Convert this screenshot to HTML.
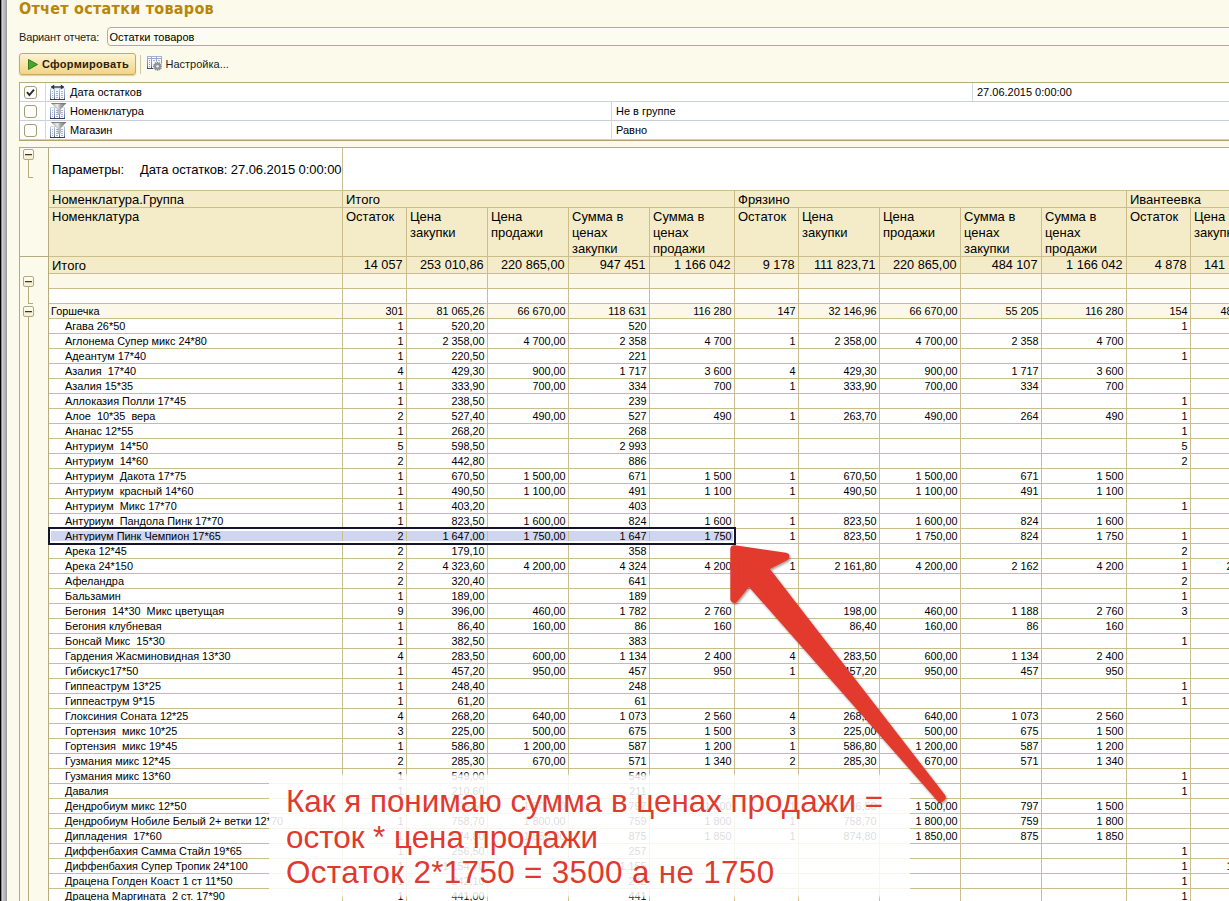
<!DOCTYPE html>
<html lang="ru">
<head>
<meta charset="utf-8">
<title>Отчет остатки товаров</title>
<style>
html,body{margin:0;padding:0;}
body{width:1229px;height:901px;overflow:hidden;position:relative;background:#fcfaeb;font-family:"Liberation Sans",sans-serif;font-size:11px;color:#000;}
#strip{position:absolute;left:0;top:0;width:8px;height:901px;background:linear-gradient(to right,#000 0px,#000 1px,#8a8a8a 1px,#8a8a8a 2px,#cfcfcf 2px,#cfcfcf 3px,#bebebe 3px,#bebebe 4px,#b8b8b8 4px,#b8b8b8 5px,#adadad 5px,#adadad 6px,#9c9e9e 6px,#9c9e9e 7px,#fefeef 7px,#fefeef 8px);}
.title{position:absolute;left:19px;top:-1px;font-family:"DejaVu Sans Condensed","Liberation Sans",sans-serif;font-weight:bold;font-size:16px;line-height:20px;color:#b8860b;white-space:nowrap;letter-spacing:0.25px;}
.lbl{position:absolute;left:19px;top:30px;line-height:14px;color:#222;white-space:nowrap;letter-spacing:-0.15px;}
.input{position:absolute;left:107px;top:27px;width:1140px;height:17px;border:1px solid #b9ad7e;border-radius:4px;background:#fdfcf1;line-height:18px;padding-left:1.5px;box-sizing:content-box;white-space:nowrap;}
.btn{position:absolute;left:19px;top:53px;width:115px;height:20px;border:1px solid #cfa95a;border-radius:3px;background:linear-gradient(#fcf3d6,#f7e3a6 55%,#f1d487);box-shadow:0 1px 1px rgba(160,130,60,.35);}
.btn svg{position:absolute;left:8px;top:5px;}
.btn span{position:absolute;left:22px;top:3px;line-height:14px;font-weight:bold;letter-spacing:0.27px;white-space:nowrap;color:#2a2210;}
.sep{position:absolute;left:140px;top:55px;width:1px;height:19px;background:#d3c79d;}
.tb-ico{position:absolute;left:147px;top:56px;}
.tb-txt{position:absolute;left:165.5px;top:57px;line-height:14px;color:#1a1a1a;white-space:nowrap;}
/* filter table */
#flt{position:absolute;left:19px;top:82px;width:1215px;height:57px;border:1px solid #b9ac7c;border-bottom-color:#b0a372;background:#fff;}
#flt .fr{position:absolute;left:0;width:100%;height:18px;border-bottom:1px solid #c9d0da;}
#flt .fr:last-child{border-bottom:none;}
#flt .vs{position:absolute;top:0;width:1px;background:#d4d9e1;}
#flt .cb{position:absolute;left:4px;top:3px;width:11px;height:11px;border:1px solid #a59b74;border-radius:3px;background:#fff;}
#flt .ic{position:absolute;left:30px;top:1px;}
#flt .t{position:absolute;top:2px;line-height:14px;white-space:nowrap;}
/* sheet */
#sheet{position:absolute;left:0;top:0;width:1229px;height:901px;font-family:"Liberation Sans",sans-serif;}
#sheetbg{position:absolute;left:49px;top:148px;width:1180px;height:760px;background:#fff;}
.r{position:absolute;left:49px;width:1180px;border-bottom:1px solid #cbbd8c;}
.r .c{position:absolute;top:0;height:100%;border-right:1px solid #cbbd8c;box-sizing:content-box;white-space:nowrap;overflow:hidden;margin-left:-49px;}
.d .c{font-size:10.9px;line-height:15px;}
.tot .c{font-size:13px;line-height:17px;}
.c.n{text-align:right;}
.c.n{padding-right:3px;box-sizing:border-box !important;}
.d .c.n{font-size:10.8px;padding-right:2.5px;}
.tot .c.n{font-size:12.7px;padding-right:3.5px;}
.c.l{box-sizing:border-box !important;white-space:pre !important;}
.h1 .c,.h2 .c{font-size:13px;line-height:16px;padding-left:3px;padding-top:1px;box-sizing:border-box;}
.param{position:absolute;left:49px;width:1180px;background:#fff;border-bottom:1px solid #cbbd8c;font-size:13px;}
.param i{position:absolute;left:293px;top:0;width:1px;height:100%;background:#cbbd8c;}
.param span{position:absolute;top:14px;letter-spacing:-0.08px;line-height:16px;margin-left:-49px;white-space:nowrap;}

#tree .tl{position:absolute;background:#b6ab7e;}
#tree .tb{position:absolute;left:23px;width:9px;height:9px;border:1px solid #b5a878;border-radius:2px;background:linear-gradient(#fffef6,#f3eed6);}
#tree .tb i{position:absolute;left:1px;top:4px;width:7px;height:1px;background:#4a3608;box-shadow:0 0.5px 0 rgba(74,54,8,.5);}
#sel{position:absolute;left:48px;top:527px;width:684px;height:14px;border:2px solid #14142e;box-shadow:inset 0 2px 0 0 #fff,inset 0 -2px 0 0 #fff,inset 1px 0 0 0 #fff,inset -1px 0 0 0 #fff;}
#ovl{position:absolute;left:269px;top:773px;width:641px;height:126px;background:linear-gradient(to bottom,rgba(255,255,255,0) 0,rgba(255,255,255,.86) 3px,rgba(255,255,255,.86) 122px,rgba(255,255,255,0) 126px);}
#note{position:absolute;left:286px;top:784px;font-family:"Liberation Sans",sans-serif;font-size:31.4px;line-height:35.5px;color:#e0392e;white-space:nowrap;}
#arrow{position:absolute;left:0;top:0;pointer-events:none;}
</style>
</head>
<body>
<div id="strip"></div>
<div class="title">Отчет остатки товаров</div>
<div class="lbl">Вариант отчета:</div>
<div class="input">Остатки товаров</div>
<div class="btn"><svg width="10" height="11" viewBox="0 0 10 11"><path d="M0.5 0.5 L9.5 5.5 L0.5 10.5 Z" fill="#4aa52e" stroke="#2f7d1a" stroke-width="1"/></svg><span>Сформировать</span></div>
<div class="sep"></div>
<svg class="tb-ico" width="16" height="16" viewBox="0 0 16 16">
<defs><linearGradient id="tg" x1="0" y1="0" x2="0" y2="1"><stop offset="0" stop-color="#a3b5d3"/><stop offset="0.75" stop-color="#6f86ac"/><stop offset="1" stop-color="#2b4163"/></linearGradient></defs>
<g shape-rendering="crispEdges"><rect x="0" y="0" width="15" height="13" fill="url(#tg)"/>
<rect x="1" y="1" width="3" height="1" fill="#fff"/><rect x="5" y="1" width="4" height="1" fill="#fff"/><rect x="10" y="1" width="4" height="1" fill="#fff"/>
<rect x="1" y="3" width="3" height="9" fill="#f5f9fe"/><rect x="5" y="3" width="4" height="9" fill="#f5f9fe"/><rect x="10" y="3" width="4" height="9" fill="#f5f9fe"/>
<g fill="#8e9cbc"><rect x="2" y="4" width="1" height="1"/><rect x="2" y="6" width="1" height="1"/><rect x="2" y="8" width="1" height="1"/><rect x="2" y="10" width="1" height="1"/><rect x="6" y="4" width="2" height="1" fill="#aab5cd"/><rect x="11" y="4" width="2" height="1" fill="#aab5cd"/></g></g>
<circle cx="10.5" cy="10.3" r="4.9" fill="#fcfaeb"/>
<g transform="translate(10.5 10.3)">
<g fill="#8c8f9a"><rect x="-0.75" y="-4.5" width="1.5" height="9"/><rect x="-0.75" y="-4.5" width="1.5" height="9" transform="rotate(30)"/><rect x="-0.75" y="-4.5" width="1.5" height="9" transform="rotate(60)"/><rect x="-0.75" y="-4.5" width="1.5" height="9" transform="rotate(90)"/><rect x="-0.75" y="-4.5" width="1.5" height="9" transform="rotate(120)"/><rect x="-0.75" y="-4.5" width="1.5" height="9" transform="rotate(150)"/></g>
<circle r="3.3" fill="#8f929d"/><circle r="1.2" fill="#f4f4f6"/>
</g>
</svg>

<div class="tb-txt">Настройка...</div>
<div id="flt">
<svg width="0" height="0" style="position:absolute"><defs>
<linearGradient id="tb1" x1="0" y1="0" x2="0" y2="1"><stop offset="0" stop-color="#c4d0e4"/><stop offset="0.8" stop-color="#7287a8"/><stop offset="1" stop-color="#2c4060"/></linearGradient>
<linearGradient id="fn" x1="0" y1="0" x2="1" y2="0"><stop offset="0" stop-color="#a8a8a8"/><stop offset="0.4" stop-color="#ececec"/><stop offset="0.62" stop-color="#a6a6a6"/><stop offset="1" stop-color="#6c6c6c"/></linearGradient>
</defs></svg>
<div class="fr" style="top:0"><div class="cb"><svg width="11" height="11" viewBox="0 0 11 11" style="position:absolute;left:0;top:0"><path d="M2 5.2 L4.4 8 L9 2.6" fill="none" stroke="#2b2b2b" stroke-width="1.9"/></svg></div>
<svg class="ic" width="17" height="17" viewBox="0 0 17 17"><g transform="translate(0 4)" shape-rendering="crispEdges"><rect x="0" y="0" width="15" height="12" fill="url(#tb1)"/><rect x="1" y="1" width="3" height="10" fill="#f6f9fd"/><rect x="5" y="1" width="4" height="10" fill="#f6f9fd"/><rect x="10" y="1" width="4" height="10" fill="#f6f9fd"/>
<rect x="0" y="0" width="15" height="1" fill="#d5deec"/><rect x="0" y="11" width="15" height="1" fill="#2c4060"/>
<g fill="#a4b1cb"><rect x="2" y="3" width="1" height="1"/><rect x="2" y="5" width="1" height="1"/><rect x="2" y="7" width="1" height="1"/><rect x="2" y="9" width="1" height="1"/><rect x="6" y="3" width="2" height="1"/><rect x="6" y="5" width="2" height="1"/><rect x="6" y="7" width="2" height="1"/><rect x="6" y="9" width="2" height="1"/><rect x="11" y="3" width="2" height="1"/><rect x="11" y="5" width="2" height="1"/><rect x="11" y="7" width="2" height="1"/><rect x="11" y="9" width="2" height="1"/></g></g><path d="M1.5 3 H13.5" stroke="#263645" stroke-width="1.4"/><path d="M0.6 3 L4.2 0.6 V5.4 Z M14.4 3 L10.8 0.6 V5.4 Z" fill="#263645"/></svg>
<div class="t" style="left:50px">Дата остатков</div><div class="t" style="left:957px">27.06.2015 0:00:00</div></div>
<div class="fr" style="top:19px"><div class="cb"></div>
<svg class="ic" width="17" height="17" viewBox="0 0 17 17"><g transform="translate(0 4)" shape-rendering="crispEdges"><rect x="0" y="0" width="15" height="12" fill="url(#tb1)"/><rect x="1" y="1" width="3" height="10" fill="#f6f9fd"/><rect x="5" y="1" width="4" height="10" fill="#f6f9fd"/><rect x="10" y="1" width="4" height="10" fill="#f6f9fd"/>
<rect x="0" y="0" width="15" height="1" fill="#d5deec"/><rect x="0" y="11" width="15" height="1" fill="#2c4060"/>
<g fill="#a4b1cb"><rect x="2" y="3" width="1" height="1"/><rect x="2" y="5" width="1" height="1"/><rect x="2" y="7" width="1" height="1"/><rect x="2" y="9" width="1" height="1"/><rect x="6" y="3" width="2" height="1"/><rect x="6" y="5" width="2" height="1"/><rect x="6" y="7" width="2" height="1"/><rect x="6" y="9" width="2" height="1"/><rect x="11" y="3" width="2" height="1"/><rect x="11" y="5" width="2" height="1"/><rect x="11" y="7" width="2" height="1"/><rect x="11" y="9" width="2" height="1"/></g></g><g><path d="M1.5 0.3 H16 L10.3 6.2 V11 L9 12 L8 11 V6.2 Z" fill="url(#fn)" stroke="#8a8a8a" stroke-width="0.5"/><path d="M1.5 0.3 H16" stroke="#6e6e6e" stroke-width="0.9"/></g></svg>
<div class="t" style="left:50px">Номенклатура</div><div class="t" style="left:596px">Не в группе</div></div>
<div class="fr" style="top:38px"><div class="cb"></div>
<svg class="ic" width="17" height="17" viewBox="0 0 17 17"><g transform="translate(0 4)" shape-rendering="crispEdges"><rect x="0" y="0" width="15" height="12" fill="url(#tb1)"/><rect x="1" y="1" width="3" height="10" fill="#f6f9fd"/><rect x="5" y="1" width="4" height="10" fill="#f6f9fd"/><rect x="10" y="1" width="4" height="10" fill="#f6f9fd"/>
<rect x="0" y="0" width="15" height="1" fill="#d5deec"/><rect x="0" y="11" width="15" height="1" fill="#2c4060"/>
<g fill="#a4b1cb"><rect x="2" y="3" width="1" height="1"/><rect x="2" y="5" width="1" height="1"/><rect x="2" y="7" width="1" height="1"/><rect x="2" y="9" width="1" height="1"/><rect x="6" y="3" width="2" height="1"/><rect x="6" y="5" width="2" height="1"/><rect x="6" y="7" width="2" height="1"/><rect x="6" y="9" width="2" height="1"/><rect x="11" y="3" width="2" height="1"/><rect x="11" y="5" width="2" height="1"/><rect x="11" y="7" width="2" height="1"/><rect x="11" y="9" width="2" height="1"/></g></g><g><path d="M1.5 0.3 H16 L10.3 6.2 V11 L9 12 L8 11 V6.2 Z" fill="url(#fn)" stroke="#8a8a8a" stroke-width="0.5"/><path d="M1.5 0.3 H16" stroke="#6e6e6e" stroke-width="0.9"/></g></svg>
<div class="t" style="left:50px">Магазин</div><div class="t" style="left:596px">Равно</div></div>
<div class="vs" style="left:25px;height:57px"></div>
<div class="vs" style="left:591px;top:19px;height:38px"></div>
<div class="vs" style="left:952px;height:18px"></div>
</div>

<div id="sheet">
<div id="sheetbg"></div>
<div class="param" style="top:148px;height:42px"><span style="left:52px">Параметры:</span><span style="left:140px">Дата остатков: 27.06.2015 0:00:00</span><i></i></div>
<div class="r h1" style="top:191px;height:16px;background:#f4ecc9"><div class="c hl" style="left:49px;width:294px">Номенклатура.Группа</div><div class="c hl" style="left:343px;width:392px">Итого</div><div class="c hl" style="left:735px;width:392px">Фрязино</div><div class="c hl" style="left:1127px;width:145px">Ивантеевка</div></div>
<div class="r h2" style="top:208px;height:48px;background:#f4ecc9"><div class="c hl" style="left:49px;width:294px">Номенклатура</div><div class="c hl" style="left:343px;width:64px">Остаток</div><div class="c hl" style="left:407px;width:81px">Цена<br>закупки</div><div class="c hl" style="left:488px;width:81px">Цена<br>продажи</div><div class="c hl" style="left:569px;width:81px">Сумма в<br>ценах<br>закупки</div><div class="c hl" style="left:650px;width:85px">Сумма в<br>ценах<br>продажи</div><div class="c hl" style="left:735px;width:64px">Остаток</div><div class="c hl" style="left:799px;width:81px">Цена<br>закупки</div><div class="c hl" style="left:880px;width:81px">Цена<br>продажи</div><div class="c hl" style="left:961px;width:81px">Сумма в<br>ценах<br>закупки</div><div class="c hl" style="left:1042px;width:85px">Сумма в<br>ценах<br>продажи</div><div class="c hl" style="left:1127px;width:64px">Остаток</div><div class="c hl" style="left:1191px;width:81px">Цена<br>закупки</div></div>
<div class="r tot" style="top:257px;height:16px;background:#f4ecc9;"><div class="c l" style="left:49px;width:294px;padding-left:3px">Итого</div><div class="c n" style="left:343px;width:64px">14 057</div><div class="c n" style="left:407px;width:81px">253 010,86</div><div class="c n" style="left:488px;width:81px">220 865,00</div><div class="c n" style="left:569px;width:81px">947 451</div><div class="c n" style="left:650px;width:85px">1 166 042</div><div class="c n" style="left:735px;width:64px">9 178</div><div class="c n" style="left:799px;width:81px">111 823,71</div><div class="c n" style="left:880px;width:81px">220 865,00</div><div class="c n" style="left:961px;width:81px">484 107</div><div class="c n" style="left:1042px;width:85px">1 166 042</div><div class="c n" style="left:1127px;width:64px">4 878</div><div class="c n" style="left:1191px;width:81px">141 187,15</div></div>
<div class="r d" style="top:274px;height:14px;background:#fbf8ea;"><div class="c l" style="left:49px;width:294px;padding-left:3px"></div><div class="c n" style="left:343px;width:64px"></div><div class="c n" style="left:407px;width:81px"></div><div class="c n" style="left:488px;width:81px"></div><div class="c n" style="left:569px;width:81px"></div><div class="c n" style="left:650px;width:85px"></div><div class="c n" style="left:735px;width:64px"></div><div class="c n" style="left:799px;width:81px"></div><div class="c n" style="left:880px;width:81px"></div><div class="c n" style="left:961px;width:81px"></div><div class="c n" style="left:1042px;width:85px"></div><div class="c n" style="left:1127px;width:64px"></div><div class="c n" style="left:1191px;width:81px"></div></div>
<div class="r d" style="top:289px;height:14px;background:#fff;"><div class="c l" style="left:49px;width:294px;padding-left:3px"></div><div class="c n" style="left:343px;width:64px"></div><div class="c n" style="left:407px;width:81px"></div><div class="c n" style="left:488px;width:81px"></div><div class="c n" style="left:569px;width:81px"></div><div class="c n" style="left:650px;width:85px"></div><div class="c n" style="left:735px;width:64px"></div><div class="c n" style="left:799px;width:81px"></div><div class="c n" style="left:880px;width:81px"></div><div class="c n" style="left:961px;width:81px"></div><div class="c n" style="left:1042px;width:85px"></div><div class="c n" style="left:1127px;width:64px"></div><div class="c n" style="left:1191px;width:81px"></div></div>
<div class="r d" style="top:304px;height:14px;background:#fbf8ea;"><div class="c l" style="left:49px;width:294px;padding-left:2px">Горшечка</div><div class="c n" style="left:343px;width:64px">301</div><div class="c n" style="left:407px;width:81px">81 065,26</div><div class="c n" style="left:488px;width:81px">66 670,00</div><div class="c n" style="left:569px;width:81px">118 631</div><div class="c n" style="left:650px;width:85px">116 280</div><div class="c n" style="left:735px;width:64px">147</div><div class="c n" style="left:799px;width:81px">32 146,96</div><div class="c n" style="left:880px;width:81px">66 670,00</div><div class="c n" style="left:961px;width:81px">55 205</div><div class="c n" style="left:1042px;width:85px">116 280</div><div class="c n" style="left:1127px;width:64px">154</div><div class="c n" style="left:1191px;width:81px">48 918,30</div></div>
<div class="r d" style="top:319px;height:14px;background:#fff;"><div class="c l" style="left:49px;width:294px;padding-left:16px">Агава 26*50</div><div class="c n" style="left:343px;width:64px">1</div><div class="c n" style="left:407px;width:81px">520,20</div><div class="c n" style="left:488px;width:81px"></div><div class="c n" style="left:569px;width:81px">520</div><div class="c n" style="left:650px;width:85px"></div><div class="c n" style="left:735px;width:64px"></div><div class="c n" style="left:799px;width:81px"></div><div class="c n" style="left:880px;width:81px"></div><div class="c n" style="left:961px;width:81px"></div><div class="c n" style="left:1042px;width:85px"></div><div class="c n" style="left:1127px;width:64px">1</div><div class="c n" style="left:1191px;width:81px"></div></div>
<div class="r d" style="top:334px;height:14px;background:#fff;"><div class="c l" style="left:49px;width:294px;padding-left:16px">Аглонема Супер микс 24*80</div><div class="c n" style="left:343px;width:64px">1</div><div class="c n" style="left:407px;width:81px">2 358,00</div><div class="c n" style="left:488px;width:81px">4 700,00</div><div class="c n" style="left:569px;width:81px">2 358</div><div class="c n" style="left:650px;width:85px">4 700</div><div class="c n" style="left:735px;width:64px">1</div><div class="c n" style="left:799px;width:81px">2 358,00</div><div class="c n" style="left:880px;width:81px">4 700,00</div><div class="c n" style="left:961px;width:81px">2 358</div><div class="c n" style="left:1042px;width:85px">4 700</div><div class="c n" style="left:1127px;width:64px"></div><div class="c n" style="left:1191px;width:81px"></div></div>
<div class="r d" style="top:349px;height:14px;background:#fff;"><div class="c l" style="left:49px;width:294px;padding-left:16px">Адеантум 17*40</div><div class="c n" style="left:343px;width:64px">1</div><div class="c n" style="left:407px;width:81px">220,50</div><div class="c n" style="left:488px;width:81px"></div><div class="c n" style="left:569px;width:81px">221</div><div class="c n" style="left:650px;width:85px"></div><div class="c n" style="left:735px;width:64px"></div><div class="c n" style="left:799px;width:81px"></div><div class="c n" style="left:880px;width:81px"></div><div class="c n" style="left:961px;width:81px"></div><div class="c n" style="left:1042px;width:85px"></div><div class="c n" style="left:1127px;width:64px">1</div><div class="c n" style="left:1191px;width:81px"></div></div>
<div class="r d" style="top:364px;height:14px;background:#fff;"><div class="c l" style="left:49px;width:294px;padding-left:16px">Азалия  17*40</div><div class="c n" style="left:343px;width:64px">4</div><div class="c n" style="left:407px;width:81px">429,30</div><div class="c n" style="left:488px;width:81px">900,00</div><div class="c n" style="left:569px;width:81px">1 717</div><div class="c n" style="left:650px;width:85px">3 600</div><div class="c n" style="left:735px;width:64px">4</div><div class="c n" style="left:799px;width:81px">429,30</div><div class="c n" style="left:880px;width:81px">900,00</div><div class="c n" style="left:961px;width:81px">1 717</div><div class="c n" style="left:1042px;width:85px">3 600</div><div class="c n" style="left:1127px;width:64px"></div><div class="c n" style="left:1191px;width:81px"></div></div>
<div class="r d" style="top:379px;height:14px;background:#fff;"><div class="c l" style="left:49px;width:294px;padding-left:16px">Азалия 15*35</div><div class="c n" style="left:343px;width:64px">1</div><div class="c n" style="left:407px;width:81px">333,90</div><div class="c n" style="left:488px;width:81px">700,00</div><div class="c n" style="left:569px;width:81px">334</div><div class="c n" style="left:650px;width:85px">700</div><div class="c n" style="left:735px;width:64px">1</div><div class="c n" style="left:799px;width:81px">333,90</div><div class="c n" style="left:880px;width:81px">700,00</div><div class="c n" style="left:961px;width:81px">334</div><div class="c n" style="left:1042px;width:85px">700</div><div class="c n" style="left:1127px;width:64px"></div><div class="c n" style="left:1191px;width:81px"></div></div>
<div class="r d" style="top:394px;height:14px;background:#fff;"><div class="c l" style="left:49px;width:294px;padding-left:16px">Аллоказия Полли 17*45</div><div class="c n" style="left:343px;width:64px">1</div><div class="c n" style="left:407px;width:81px">238,50</div><div class="c n" style="left:488px;width:81px"></div><div class="c n" style="left:569px;width:81px">239</div><div class="c n" style="left:650px;width:85px"></div><div class="c n" style="left:735px;width:64px"></div><div class="c n" style="left:799px;width:81px"></div><div class="c n" style="left:880px;width:81px"></div><div class="c n" style="left:961px;width:81px"></div><div class="c n" style="left:1042px;width:85px"></div><div class="c n" style="left:1127px;width:64px">1</div><div class="c n" style="left:1191px;width:81px"></div></div>
<div class="r d" style="top:409px;height:14px;background:#fff;"><div class="c l" style="left:49px;width:294px;padding-left:16px">Алое  10*35  вера</div><div class="c n" style="left:343px;width:64px">2</div><div class="c n" style="left:407px;width:81px">527,40</div><div class="c n" style="left:488px;width:81px">490,00</div><div class="c n" style="left:569px;width:81px">527</div><div class="c n" style="left:650px;width:85px">490</div><div class="c n" style="left:735px;width:64px">1</div><div class="c n" style="left:799px;width:81px">263,70</div><div class="c n" style="left:880px;width:81px">490,00</div><div class="c n" style="left:961px;width:81px">264</div><div class="c n" style="left:1042px;width:85px">490</div><div class="c n" style="left:1127px;width:64px">1</div><div class="c n" style="left:1191px;width:81px"></div></div>
<div class="r d" style="top:424px;height:14px;background:#fff;"><div class="c l" style="left:49px;width:294px;padding-left:16px">Ананас 12*55</div><div class="c n" style="left:343px;width:64px">1</div><div class="c n" style="left:407px;width:81px">268,20</div><div class="c n" style="left:488px;width:81px"></div><div class="c n" style="left:569px;width:81px">268</div><div class="c n" style="left:650px;width:85px"></div><div class="c n" style="left:735px;width:64px"></div><div class="c n" style="left:799px;width:81px"></div><div class="c n" style="left:880px;width:81px"></div><div class="c n" style="left:961px;width:81px"></div><div class="c n" style="left:1042px;width:85px"></div><div class="c n" style="left:1127px;width:64px">1</div><div class="c n" style="left:1191px;width:81px"></div></div>
<div class="r d" style="top:439px;height:14px;background:#fff;"><div class="c l" style="left:49px;width:294px;padding-left:16px">Антуриум  14*50</div><div class="c n" style="left:343px;width:64px">5</div><div class="c n" style="left:407px;width:81px">598,50</div><div class="c n" style="left:488px;width:81px"></div><div class="c n" style="left:569px;width:81px">2 993</div><div class="c n" style="left:650px;width:85px"></div><div class="c n" style="left:735px;width:64px"></div><div class="c n" style="left:799px;width:81px"></div><div class="c n" style="left:880px;width:81px"></div><div class="c n" style="left:961px;width:81px"></div><div class="c n" style="left:1042px;width:85px"></div><div class="c n" style="left:1127px;width:64px">5</div><div class="c n" style="left:1191px;width:81px"></div></div>
<div class="r d" style="top:454px;height:14px;background:#fff;"><div class="c l" style="left:49px;width:294px;padding-left:16px">Антуриум  14*60</div><div class="c n" style="left:343px;width:64px">2</div><div class="c n" style="left:407px;width:81px">442,80</div><div class="c n" style="left:488px;width:81px"></div><div class="c n" style="left:569px;width:81px">886</div><div class="c n" style="left:650px;width:85px"></div><div class="c n" style="left:735px;width:64px"></div><div class="c n" style="left:799px;width:81px"></div><div class="c n" style="left:880px;width:81px"></div><div class="c n" style="left:961px;width:81px"></div><div class="c n" style="left:1042px;width:85px"></div><div class="c n" style="left:1127px;width:64px">2</div><div class="c n" style="left:1191px;width:81px"></div></div>
<div class="r d" style="top:469px;height:14px;background:#fff;"><div class="c l" style="left:49px;width:294px;padding-left:16px">Антуриум  Дакота 17*75</div><div class="c n" style="left:343px;width:64px">1</div><div class="c n" style="left:407px;width:81px">670,50</div><div class="c n" style="left:488px;width:81px">1 500,00</div><div class="c n" style="left:569px;width:81px">671</div><div class="c n" style="left:650px;width:85px">1 500</div><div class="c n" style="left:735px;width:64px">1</div><div class="c n" style="left:799px;width:81px">670,50</div><div class="c n" style="left:880px;width:81px">1 500,00</div><div class="c n" style="left:961px;width:81px">671</div><div class="c n" style="left:1042px;width:85px">1 500</div><div class="c n" style="left:1127px;width:64px"></div><div class="c n" style="left:1191px;width:81px"></div></div>
<div class="r d" style="top:484px;height:14px;background:#fff;"><div class="c l" style="left:49px;width:294px;padding-left:16px">Антуриум  красный 14*60</div><div class="c n" style="left:343px;width:64px">1</div><div class="c n" style="left:407px;width:81px">490,50</div><div class="c n" style="left:488px;width:81px">1 100,00</div><div class="c n" style="left:569px;width:81px">491</div><div class="c n" style="left:650px;width:85px">1 100</div><div class="c n" style="left:735px;width:64px">1</div><div class="c n" style="left:799px;width:81px">490,50</div><div class="c n" style="left:880px;width:81px">1 100,00</div><div class="c n" style="left:961px;width:81px">491</div><div class="c n" style="left:1042px;width:85px">1 100</div><div class="c n" style="left:1127px;width:64px"></div><div class="c n" style="left:1191px;width:81px"></div></div>
<div class="r d" style="top:499px;height:14px;background:#fff;"><div class="c l" style="left:49px;width:294px;padding-left:16px">Антуриум  Микс 17*70</div><div class="c n" style="left:343px;width:64px">1</div><div class="c n" style="left:407px;width:81px">403,20</div><div class="c n" style="left:488px;width:81px"></div><div class="c n" style="left:569px;width:81px">403</div><div class="c n" style="left:650px;width:85px"></div><div class="c n" style="left:735px;width:64px"></div><div class="c n" style="left:799px;width:81px"></div><div class="c n" style="left:880px;width:81px"></div><div class="c n" style="left:961px;width:81px"></div><div class="c n" style="left:1042px;width:85px"></div><div class="c n" style="left:1127px;width:64px">1</div><div class="c n" style="left:1191px;width:81px"></div></div>
<div class="r d" style="top:514px;height:14px;background:#fff;"><div class="c l" style="left:49px;width:294px;padding-left:16px">Антуриум  Пандола Пинк 17*70</div><div class="c n" style="left:343px;width:64px">1</div><div class="c n" style="left:407px;width:81px">823,50</div><div class="c n" style="left:488px;width:81px">1 600,00</div><div class="c n" style="left:569px;width:81px">824</div><div class="c n" style="left:650px;width:85px">1 600</div><div class="c n" style="left:735px;width:64px">1</div><div class="c n" style="left:799px;width:81px">823,50</div><div class="c n" style="left:880px;width:81px">1 600,00</div><div class="c n" style="left:961px;width:81px">824</div><div class="c n" style="left:1042px;width:85px">1 600</div><div class="c n" style="left:1127px;width:64px"></div><div class="c n" style="left:1191px;width:81px"></div></div>
<div class="r d" style="top:529px;height:14px;background:#fff;"><div class="c l" style="background:#d0d6ef;left:49px;width:294px;padding-left:16px">Антуриум Пинк Чемпион 17*65</div><div class="c n" style="background:#d0d6ef;left:343px;width:64px">2</div><div class="c n" style="background:#d0d6ef;left:407px;width:81px">1 647,00</div><div class="c n" style="background:#d0d6ef;left:488px;width:81px">1 750,00</div><div class="c n" style="background:#d0d6ef;left:569px;width:81px">1 647</div><div class="c n" style="background:#d0d6ef;left:650px;width:85px">1 750</div><div class="c n" style="left:735px;width:64px">1</div><div class="c n" style="left:799px;width:81px">823,50</div><div class="c n" style="left:880px;width:81px">1 750,00</div><div class="c n" style="left:961px;width:81px">824</div><div class="c n" style="left:1042px;width:85px">1 750</div><div class="c n" style="left:1127px;width:64px">1</div><div class="c n" style="left:1191px;width:81px"></div></div>
<div class="r d" style="top:544px;height:14px;background:#fff;"><div class="c l" style="left:49px;width:294px;padding-left:16px">Арека 12*45</div><div class="c n" style="left:343px;width:64px">2</div><div class="c n" style="left:407px;width:81px">179,10</div><div class="c n" style="left:488px;width:81px"></div><div class="c n" style="left:569px;width:81px">358</div><div class="c n" style="left:650px;width:85px"></div><div class="c n" style="left:735px;width:64px"></div><div class="c n" style="left:799px;width:81px"></div><div class="c n" style="left:880px;width:81px"></div><div class="c n" style="left:961px;width:81px"></div><div class="c n" style="left:1042px;width:85px"></div><div class="c n" style="left:1127px;width:64px">2</div><div class="c n" style="left:1191px;width:81px"></div></div>
<div class="r d" style="top:559px;height:14px;background:#fff;"><div class="c l" style="left:49px;width:294px;padding-left:16px">Арека 24*150</div><div class="c n" style="left:343px;width:64px">2</div><div class="c n" style="left:407px;width:81px">4 323,60</div><div class="c n" style="left:488px;width:81px">4 200,00</div><div class="c n" style="left:569px;width:81px">4 324</div><div class="c n" style="left:650px;width:85px">4 200</div><div class="c n" style="left:735px;width:64px">1</div><div class="c n" style="left:799px;width:81px">2 161,80</div><div class="c n" style="left:880px;width:81px">4 200,00</div><div class="c n" style="left:961px;width:81px">2 162</div><div class="c n" style="left:1042px;width:85px">4 200</div><div class="c n" style="left:1127px;width:64px">1</div><div class="c n" style="left:1191px;width:81px">2 161,80</div></div>
<div class="r d" style="top:574px;height:14px;background:#fff;"><div class="c l" style="left:49px;width:294px;padding-left:16px">Афеландра</div><div class="c n" style="left:343px;width:64px">2</div><div class="c n" style="left:407px;width:81px">320,40</div><div class="c n" style="left:488px;width:81px"></div><div class="c n" style="left:569px;width:81px">641</div><div class="c n" style="left:650px;width:85px"></div><div class="c n" style="left:735px;width:64px"></div><div class="c n" style="left:799px;width:81px"></div><div class="c n" style="left:880px;width:81px"></div><div class="c n" style="left:961px;width:81px"></div><div class="c n" style="left:1042px;width:85px"></div><div class="c n" style="left:1127px;width:64px">2</div><div class="c n" style="left:1191px;width:81px"></div></div>
<div class="r d" style="top:589px;height:14px;background:#fff;"><div class="c l" style="left:49px;width:294px;padding-left:16px">Бальзамин</div><div class="c n" style="left:343px;width:64px">1</div><div class="c n" style="left:407px;width:81px">189,00</div><div class="c n" style="left:488px;width:81px"></div><div class="c n" style="left:569px;width:81px">189</div><div class="c n" style="left:650px;width:85px"></div><div class="c n" style="left:735px;width:64px"></div><div class="c n" style="left:799px;width:81px"></div><div class="c n" style="left:880px;width:81px"></div><div class="c n" style="left:961px;width:81px"></div><div class="c n" style="left:1042px;width:85px"></div><div class="c n" style="left:1127px;width:64px">1</div><div class="c n" style="left:1191px;width:81px"></div></div>
<div class="r d" style="top:604px;height:14px;background:#fff;"><div class="c l" style="left:49px;width:294px;padding-left:16px">Бегония  14*30  Микс цветущая</div><div class="c n" style="left:343px;width:64px">9</div><div class="c n" style="left:407px;width:81px">396,00</div><div class="c n" style="left:488px;width:81px">460,00</div><div class="c n" style="left:569px;width:81px">1 782</div><div class="c n" style="left:650px;width:85px">2 760</div><div class="c n" style="left:735px;width:64px">6</div><div class="c n" style="left:799px;width:81px">198,00</div><div class="c n" style="left:880px;width:81px">460,00</div><div class="c n" style="left:961px;width:81px">1 188</div><div class="c n" style="left:1042px;width:85px">2 760</div><div class="c n" style="left:1127px;width:64px">3</div><div class="c n" style="left:1191px;width:81px"></div></div>
<div class="r d" style="top:619px;height:14px;background:#fff;"><div class="c l" style="left:49px;width:294px;padding-left:16px">Бегония клубневая</div><div class="c n" style="left:343px;width:64px">1</div><div class="c n" style="left:407px;width:81px">86,40</div><div class="c n" style="left:488px;width:81px">160,00</div><div class="c n" style="left:569px;width:81px">86</div><div class="c n" style="left:650px;width:85px">160</div><div class="c n" style="left:735px;width:64px">1</div><div class="c n" style="left:799px;width:81px">86,40</div><div class="c n" style="left:880px;width:81px">160,00</div><div class="c n" style="left:961px;width:81px">86</div><div class="c n" style="left:1042px;width:85px">160</div><div class="c n" style="left:1127px;width:64px"></div><div class="c n" style="left:1191px;width:81px"></div></div>
<div class="r d" style="top:634px;height:14px;background:#fff;"><div class="c l" style="left:49px;width:294px;padding-left:16px">Бонсай Микс  15*30</div><div class="c n" style="left:343px;width:64px">1</div><div class="c n" style="left:407px;width:81px">382,50</div><div class="c n" style="left:488px;width:81px"></div><div class="c n" style="left:569px;width:81px">383</div><div class="c n" style="left:650px;width:85px"></div><div class="c n" style="left:735px;width:64px"></div><div class="c n" style="left:799px;width:81px"></div><div class="c n" style="left:880px;width:81px"></div><div class="c n" style="left:961px;width:81px"></div><div class="c n" style="left:1042px;width:85px"></div><div class="c n" style="left:1127px;width:64px">1</div><div class="c n" style="left:1191px;width:81px"></div></div>
<div class="r d" style="top:649px;height:14px;background:#fff;"><div class="c l" style="left:49px;width:294px;padding-left:16px">Гардения Жасминовидная 13*30</div><div class="c n" style="left:343px;width:64px">4</div><div class="c n" style="left:407px;width:81px">283,50</div><div class="c n" style="left:488px;width:81px">600,00</div><div class="c n" style="left:569px;width:81px">1 134</div><div class="c n" style="left:650px;width:85px">2 400</div><div class="c n" style="left:735px;width:64px">4</div><div class="c n" style="left:799px;width:81px">283,50</div><div class="c n" style="left:880px;width:81px">600,00</div><div class="c n" style="left:961px;width:81px">1 134</div><div class="c n" style="left:1042px;width:85px">2 400</div><div class="c n" style="left:1127px;width:64px"></div><div class="c n" style="left:1191px;width:81px"></div></div>
<div class="r d" style="top:664px;height:14px;background:#fff;"><div class="c l" style="left:49px;width:294px;padding-left:16px">Гибискус17*50</div><div class="c n" style="left:343px;width:64px">1</div><div class="c n" style="left:407px;width:81px">457,20</div><div class="c n" style="left:488px;width:81px">950,00</div><div class="c n" style="left:569px;width:81px">457</div><div class="c n" style="left:650px;width:85px">950</div><div class="c n" style="left:735px;width:64px">1</div><div class="c n" style="left:799px;width:81px">457,20</div><div class="c n" style="left:880px;width:81px">950,00</div><div class="c n" style="left:961px;width:81px">457</div><div class="c n" style="left:1042px;width:85px">950</div><div class="c n" style="left:1127px;width:64px"></div><div class="c n" style="left:1191px;width:81px"></div></div>
<div class="r d" style="top:679px;height:14px;background:#fff;"><div class="c l" style="left:49px;width:294px;padding-left:16px">Гиппеаструм 13*25</div><div class="c n" style="left:343px;width:64px">1</div><div class="c n" style="left:407px;width:81px">248,40</div><div class="c n" style="left:488px;width:81px"></div><div class="c n" style="left:569px;width:81px">248</div><div class="c n" style="left:650px;width:85px"></div><div class="c n" style="left:735px;width:64px"></div><div class="c n" style="left:799px;width:81px"></div><div class="c n" style="left:880px;width:81px"></div><div class="c n" style="left:961px;width:81px"></div><div class="c n" style="left:1042px;width:85px"></div><div class="c n" style="left:1127px;width:64px">1</div><div class="c n" style="left:1191px;width:81px"></div></div>
<div class="r d" style="top:694px;height:14px;background:#fff;"><div class="c l" style="left:49px;width:294px;padding-left:16px">Гиппеаструм 9*15</div><div class="c n" style="left:343px;width:64px">1</div><div class="c n" style="left:407px;width:81px">61,20</div><div class="c n" style="left:488px;width:81px"></div><div class="c n" style="left:569px;width:81px">61</div><div class="c n" style="left:650px;width:85px"></div><div class="c n" style="left:735px;width:64px"></div><div class="c n" style="left:799px;width:81px"></div><div class="c n" style="left:880px;width:81px"></div><div class="c n" style="left:961px;width:81px"></div><div class="c n" style="left:1042px;width:85px"></div><div class="c n" style="left:1127px;width:64px">1</div><div class="c n" style="left:1191px;width:81px"></div></div>
<div class="r d" style="top:709px;height:14px;background:#fff;"><div class="c l" style="left:49px;width:294px;padding-left:16px">Глоксиния Соната 12*25</div><div class="c n" style="left:343px;width:64px">4</div><div class="c n" style="left:407px;width:81px">268,20</div><div class="c n" style="left:488px;width:81px">640,00</div><div class="c n" style="left:569px;width:81px">1 073</div><div class="c n" style="left:650px;width:85px">2 560</div><div class="c n" style="left:735px;width:64px">4</div><div class="c n" style="left:799px;width:81px">268,20</div><div class="c n" style="left:880px;width:81px">640,00</div><div class="c n" style="left:961px;width:81px">1 073</div><div class="c n" style="left:1042px;width:85px">2 560</div><div class="c n" style="left:1127px;width:64px"></div><div class="c n" style="left:1191px;width:81px"></div></div>
<div class="r d" style="top:724px;height:14px;background:#fff;"><div class="c l" style="left:49px;width:294px;padding-left:16px">Гортензия  микс 10*25</div><div class="c n" style="left:343px;width:64px">3</div><div class="c n" style="left:407px;width:81px">225,00</div><div class="c n" style="left:488px;width:81px">500,00</div><div class="c n" style="left:569px;width:81px">675</div><div class="c n" style="left:650px;width:85px">1 500</div><div class="c n" style="left:735px;width:64px">3</div><div class="c n" style="left:799px;width:81px">225,00</div><div class="c n" style="left:880px;width:81px">500,00</div><div class="c n" style="left:961px;width:81px">675</div><div class="c n" style="left:1042px;width:85px">1 500</div><div class="c n" style="left:1127px;width:64px"></div><div class="c n" style="left:1191px;width:81px"></div></div>
<div class="r d" style="top:739px;height:14px;background:#fff;"><div class="c l" style="left:49px;width:294px;padding-left:16px">Гортензия  микс 19*45</div><div class="c n" style="left:343px;width:64px">1</div><div class="c n" style="left:407px;width:81px">586,80</div><div class="c n" style="left:488px;width:81px">1 200,00</div><div class="c n" style="left:569px;width:81px">587</div><div class="c n" style="left:650px;width:85px">1 200</div><div class="c n" style="left:735px;width:64px">1</div><div class="c n" style="left:799px;width:81px">586,80</div><div class="c n" style="left:880px;width:81px">1 200,00</div><div class="c n" style="left:961px;width:81px">587</div><div class="c n" style="left:1042px;width:85px">1 200</div><div class="c n" style="left:1127px;width:64px"></div><div class="c n" style="left:1191px;width:81px"></div></div>
<div class="r d" style="top:754px;height:14px;background:#fff;"><div class="c l" style="left:49px;width:294px;padding-left:16px">Гузмания микс 12*45</div><div class="c n" style="left:343px;width:64px">2</div><div class="c n" style="left:407px;width:81px">285,30</div><div class="c n" style="left:488px;width:81px">670,00</div><div class="c n" style="left:569px;width:81px">571</div><div class="c n" style="left:650px;width:85px">1 340</div><div class="c n" style="left:735px;width:64px">2</div><div class="c n" style="left:799px;width:81px">285,30</div><div class="c n" style="left:880px;width:81px">670,00</div><div class="c n" style="left:961px;width:81px">571</div><div class="c n" style="left:1042px;width:85px">1 340</div><div class="c n" style="left:1127px;width:64px"></div><div class="c n" style="left:1191px;width:81px"></div></div>
<div class="r d" style="top:769px;height:14px;background:#fff;"><div class="c l" style="left:49px;width:294px;padding-left:16px">Гузмания микс 13*60</div><div class="c n" style="left:343px;width:64px">1</div><div class="c n" style="left:407px;width:81px">549,00</div><div class="c n" style="left:488px;width:81px"></div><div class="c n" style="left:569px;width:81px">549</div><div class="c n" style="left:650px;width:85px"></div><div class="c n" style="left:735px;width:64px"></div><div class="c n" style="left:799px;width:81px"></div><div class="c n" style="left:880px;width:81px"></div><div class="c n" style="left:961px;width:81px"></div><div class="c n" style="left:1042px;width:85px"></div><div class="c n" style="left:1127px;width:64px">1</div><div class="c n" style="left:1191px;width:81px"></div></div>
<div class="r d" style="top:784px;height:14px;background:#fff;"><div class="c l" style="left:49px;width:294px;padding-left:16px">Давалия</div><div class="c n" style="left:343px;width:64px">1</div><div class="c n" style="left:407px;width:81px">210,60</div><div class="c n" style="left:488px;width:81px"></div><div class="c n" style="left:569px;width:81px">211</div><div class="c n" style="left:650px;width:85px"></div><div class="c n" style="left:735px;width:64px"></div><div class="c n" style="left:799px;width:81px"></div><div class="c n" style="left:880px;width:81px"></div><div class="c n" style="left:961px;width:81px"></div><div class="c n" style="left:1042px;width:85px"></div><div class="c n" style="left:1127px;width:64px">1</div><div class="c n" style="left:1191px;width:81px"></div></div>
<div class="r d" style="top:799px;height:14px;background:#fff;"><div class="c l" style="left:49px;width:294px;padding-left:16px">Дендробиум микс 12*50</div><div class="c n" style="left:343px;width:64px">1</div><div class="c n" style="left:407px;width:81px">796,50</div><div class="c n" style="left:488px;width:81px">1 500,00</div><div class="c n" style="left:569px;width:81px">797</div><div class="c n" style="left:650px;width:85px">1 500</div><div class="c n" style="left:735px;width:64px">1</div><div class="c n" style="left:799px;width:81px">796,50</div><div class="c n" style="left:880px;width:81px">1 500,00</div><div class="c n" style="left:961px;width:81px">797</div><div class="c n" style="left:1042px;width:85px">1 500</div><div class="c n" style="left:1127px;width:64px"></div><div class="c n" style="left:1191px;width:81px"></div></div>
<div class="r d" style="top:814px;height:14px;background:#fff;"><div class="c l" style="left:49px;width:294px;padding-left:16px">Дендробиум Нобиле Белый 2+ ветки 12*70</div><div class="c n" style="left:343px;width:64px">1</div><div class="c n" style="left:407px;width:81px">758,70</div><div class="c n" style="left:488px;width:81px">1 800,00</div><div class="c n" style="left:569px;width:81px">759</div><div class="c n" style="left:650px;width:85px">1 800</div><div class="c n" style="left:735px;width:64px">1</div><div class="c n" style="left:799px;width:81px">758,70</div><div class="c n" style="left:880px;width:81px">1 800,00</div><div class="c n" style="left:961px;width:81px">759</div><div class="c n" style="left:1042px;width:85px">1 800</div><div class="c n" style="left:1127px;width:64px"></div><div class="c n" style="left:1191px;width:81px"></div></div>
<div class="r d" style="top:829px;height:14px;background:#fff;"><div class="c l" style="left:49px;width:294px;padding-left:16px">Дипладения  17*60</div><div class="c n" style="left:343px;width:64px">1</div><div class="c n" style="left:407px;width:81px">874,80</div><div class="c n" style="left:488px;width:81px">1 850,00</div><div class="c n" style="left:569px;width:81px">875</div><div class="c n" style="left:650px;width:85px">1 850</div><div class="c n" style="left:735px;width:64px">1</div><div class="c n" style="left:799px;width:81px">874,80</div><div class="c n" style="left:880px;width:81px">1 850,00</div><div class="c n" style="left:961px;width:81px">875</div><div class="c n" style="left:1042px;width:85px">1 850</div><div class="c n" style="left:1127px;width:64px"></div><div class="c n" style="left:1191px;width:81px"></div></div>
<div class="r d" style="top:844px;height:14px;background:#fff;"><div class="c l" style="left:49px;width:294px;padding-left:16px">Диффенбахия Самма Стайл 19*65</div><div class="c n" style="left:343px;width:64px">1</div><div class="c n" style="left:407px;width:81px">256,50</div><div class="c n" style="left:488px;width:81px"></div><div class="c n" style="left:569px;width:81px">257</div><div class="c n" style="left:650px;width:85px"></div><div class="c n" style="left:735px;width:64px"></div><div class="c n" style="left:799px;width:81px"></div><div class="c n" style="left:880px;width:81px"></div><div class="c n" style="left:961px;width:81px"></div><div class="c n" style="left:1042px;width:85px"></div><div class="c n" style="left:1127px;width:64px">1</div><div class="c n" style="left:1191px;width:81px"></div></div>
<div class="r d" style="top:859px;height:14px;background:#fff;"><div class="c l" style="left:49px;width:294px;padding-left:16px">Диффенбахия Супер Тропик 24*100</div><div class="c n" style="left:343px;width:64px">1</div><div class="c n" style="left:407px;width:81px">1 154,70</div><div class="c n" style="left:488px;width:81px"></div><div class="c n" style="left:569px;width:81px">1 155</div><div class="c n" style="left:650px;width:85px"></div><div class="c n" style="left:735px;width:64px"></div><div class="c n" style="left:799px;width:81px"></div><div class="c n" style="left:880px;width:81px"></div><div class="c n" style="left:961px;width:81px"></div><div class="c n" style="left:1042px;width:85px"></div><div class="c n" style="left:1127px;width:64px">1</div><div class="c n" style="left:1191px;width:81px">1 154,70</div></div>
<div class="r d" style="top:874px;height:14px;background:#fff;"><div class="c l" style="left:49px;width:294px;padding-left:16px">Драцена Голден Коаст 1 ст 11*50</div><div class="c n" style="left:343px;width:64px">1</div><div class="c n" style="left:407px;width:81px">242,10</div><div class="c n" style="left:488px;width:81px"></div><div class="c n" style="left:569px;width:81px">242</div><div class="c n" style="left:650px;width:85px"></div><div class="c n" style="left:735px;width:64px"></div><div class="c n" style="left:799px;width:81px"></div><div class="c n" style="left:880px;width:81px"></div><div class="c n" style="left:961px;width:81px"></div><div class="c n" style="left:1042px;width:85px"></div><div class="c n" style="left:1127px;width:64px">1</div><div class="c n" style="left:1191px;width:81px"></div></div>
<div class="r d" style="top:889px;height:14px;background:#fff;"><div class="c l" style="left:49px;width:294px;padding-left:16px">Драцена Маргината  2 ст. 17*90</div><div class="c n" style="left:343px;width:64px">1</div><div class="c n" style="left:407px;width:81px">441,00</div><div class="c n" style="left:488px;width:81px"></div><div class="c n" style="left:569px;width:81px">441</div><div class="c n" style="left:650px;width:85px"></div><div class="c n" style="left:735px;width:64px"></div><div class="c n" style="left:799px;width:81px"></div><div class="c n" style="left:880px;width:81px"></div><div class="c n" style="left:961px;width:81px"></div><div class="c n" style="left:1042px;width:85px"></div><div class="c n" style="left:1127px;width:64px">1</div><div class="c n" style="left:1191px;width:81px"></div></div>
<div id="tree">
<div class="tl" style="left:19px;top:147px;width:1210px;height:1px"></div>
<div class="tl" style="left:19px;top:147px;width:1px;height:760px"></div>
<div class="tl" style="left:48px;top:147px;width:1px;height:760px"></div>
<div class="tl" style="left:19px;top:256px;width:30px;height:1px"></div>
<div class="tl" style="left:28px;top:160px;width:1px;height:18px"></div><div class="tl" style="left:28px;top:177px;width:5px;height:1px"></div>
<div class="tl" style="left:28px;top:287px;width:1px;height:17px"></div><div class="tl" style="left:28px;top:303px;width:5px;height:1px"></div>
<div class="tl" style="left:28px;top:317px;width:1px;height:600px"></div>
<div class="tb" style="top:149px"><i></i></div>
<div class="tb" style="top:276px"><i></i></div>
<div class="tb" style="top:306px"><i></i></div>
</div>

</div>
<div id="sel"></div>

<div id="ovl"></div>
<div id="note">Как я понимаю сумма в ценах продажи =<br>осток * цена продажи<br><span style="letter-spacing:0.33px">Остаток 2*1750 = 3500 а не 1750</span></div>

<svg id="arrow" width="1229" height="901" viewBox="0 0 1229 901"><defs><filter id="ash" x="-5%" y="-5%" width="110%" height="110%"><feDropShadow dx="1" dy="1.5" stdDeviation="0.8" flood-color="#000" flood-opacity="0.4"/></filter></defs>
<path d="M734.3 549.2 L785.4 556.8 L763.9 567.6 L941.7 797.3 L940.5 798.3 L748.9 580.8 L734.3 599.0 Z" fill="#e23a2f" stroke="#e23a2f" stroke-width="8" stroke-linejoin="round" filter="url(#ash)"/>
</svg>

</body>
</html>
